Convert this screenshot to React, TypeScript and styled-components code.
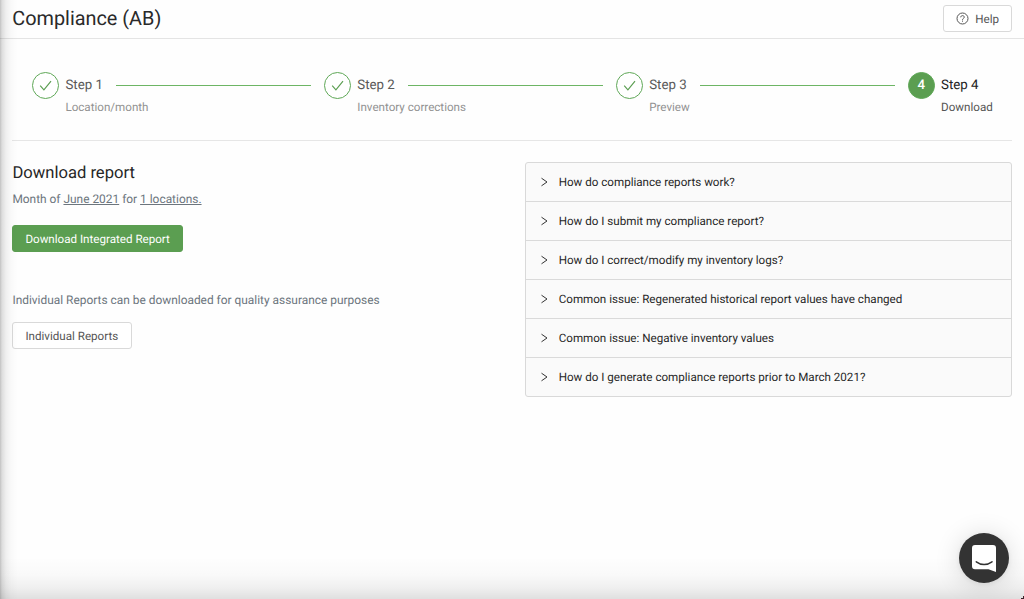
import React from "react";
import styled, { createGlobalStyle, css } from "styled-components";

const GlobalStyle = createGlobalStyle`
  *, *::before, *::after { box-sizing: border-box; }
  body {
    margin: 0;
    overflow: hidden;
    background: #fefefe;
    color: #2b2b2b;
    font-family: Roboto, "Liberation Sans", sans-serif;
    font-size: 11.62px;
    text-rendering: geometricPrecision;
  }
  h1, h2, p { margin: 0; font-weight: 400; }
  button { font-family: inherit; cursor: pointer; text-rendering: inherit; }
`;

const Page = styled.div`
  position: relative;
  display: flex;
  flex-direction: column;
  height: 599px;
`;

const EdgeShade = styled.div`
  position: absolute;
  inset: 0;
  pointer-events: none;
  background:
    linear-gradient(to right, rgba(0, 0, 0, 0.24) 0, rgba(0, 0, 0, 0.13) 2px, rgba(0, 0, 0, 0.06) 6px, rgba(0, 0, 0, 0.02) 11px, transparent 18px),
    linear-gradient(to top, rgba(0, 0, 0, 0.12) 0, rgba(0, 0, 0, 0.06) 11px, rgba(0, 0, 0, 0.02) 24px, transparent 42px);
  &::after {
    content: "";
    position: absolute;
    right: 0;
    bottom: 0;
    width: 3px;
    height: 3px;
    background: linear-gradient(135deg, transparent 50%, #3a2028 50%);
  }
`;

const Header = styled.header`
  display: flex;
  justify-content: space-between;
  align-items: flex-start;
  height: 39px;
  padding: 5px 11.6px 0 12.3px;
  border-bottom: 1px solid #e4e4e4;
`;

const Title = styled.h1`
  font-size: 19.85px;
  line-height: 28px;
  color: #2a2a2a;
`;

const Button = styled.button<{ $primary?: boolean }>`
  display: inline-flex;
  align-items: center;
  height: 27px;
  padding: 0 12.4px;
  border: 1px solid #d9d9d9;
  border-radius: 3px;
  background: #fff;
  color: #555;
  font-size: 11.62px;
  white-space: nowrap;
  ${(p) =>
    p.$primary &&
    css`
      border-color: #5b9e51;
      background: #5b9e51;
      color: #fff;
    `}
`;

const HelpIcon = styled.svg`
  width: 13px;
  height: 13px;
  margin: 0 6px 0 -0.4px;
`;

const Steps = styled.nav`
  display: flex;
  height: 102px;
  margin: 0 12px;
  padding: 33px 0 0 20px;
  border-bottom: 1px solid #e6e6e6;
`;

const Step = styled.div`
  display: flex;
  flex: 0 0 291.9px;
  &:last-child { flex-basis: auto; }
`;

const StepCircle = styled.span<{ $active?: boolean }>`
  display: flex;
  align-items: center;
  justify-content: center;
  flex: none;
  width: 27px;
  height: 27px;
  border: 1px solid #5fa857;
  border-radius: 50%;
  background: ${(p) => (p.$active ? "#5b9e51" : "#fff")};
  color: ${(p) => (p.$active ? "#fff" : "#5b9e51")};
  font-size: 13.3px;
  font-weight: 500;
`;

const StepText = styled.div`
  flex: 1;
  min-width: 0;
  margin-left: 6.4px;
`;

const StepTitle = styled.div<{ $active?: boolean }>`
  display: flex;
  align-items: center;
  height: 26px;
  font-size: 13.3px;
  color: ${(p) => (p.$active ? "#222" : "#595959")};
  white-space: nowrap;
  &::after {
    content: "";
    display: ${(p) => (p.$active ? "none" : "block")};
    flex: 1;
    height: 1px;
    margin: 1px 12.5px 0 13.5px;
    background: #6db564;
  }
`;

const StepDescription = styled.div<{ $active?: boolean }>`
  line-height: 18px;
  color: ${(p) => (p.$active ? "#555" : "#929292")};
`;

const Content = styled.main`
  display: grid;
  grid-template-columns: 1fr 487.5px;
  padding: 21px 11.6px 0 12px;
`;

const Report = styled.section`
  display: flex;
  flex-direction: column;
  align-items: flex-start;
`;

const ReportHeading = styled.h2`
  padding-left: 0.4px;
  font-size: 16.6px;
  line-height: 24px;
  color: #262626;
`;

const Copy = styled.p`
  padding-left: 0.4px;
  font-size: 11.92px;
  line-height: 18px;
  color: #6c757d;
`;

const Summary = styled(Copy)`
  margin: 4px 0 17px;
`;

const Note = styled(Copy)`
  margin: 39px 0 13px;
`;

const Questions = styled.section`
  height: 235px;
  border: 1px solid #d9d9d9;
  border-radius: 3px;
  background: #fafafa;
  overflow: hidden;
`;

const Question = styled.div`
  display: flex;
  align-items: center;
  height: 39px;
  padding: 0 0 1px 14px;
  border-bottom: 1px solid #dadada;
  color: #262626;
  &:last-child { border-bottom: 0; height: 38px; }
`;

const Chevron = styled.svg`
  width: 9px;
  height: 10px;
  margin-right: 9.8px;
`;

const ChatLauncher = styled.button`
  position: absolute;
  right: 15px;
  bottom: 16px;
  display: flex;
  align-items: center;
  justify-content: center;
  width: 50px;
  height: 50px;
  padding: 0;
  border: 0;
  border-radius: 50%;
  background: #333;
  box-shadow: 0 1px 5px rgba(0, 0, 0, 0.07), 0 2px 27px rgba(0, 0, 0, 0.14);
`;

const steps = [
  { title: "Step 1", description: "Location/month" },
  { title: "Step 2", description: "Inventory corrections" },
  { title: "Step 3", description: "Preview" },
  { title: "Step 4", description: "Download", active: true },
];

const questions = [
  "How do compliance reports work?",
  "How do I submit my compliance report?",
  "How do I correct/modify my inventory logs?",
  "Common issue: Regenerated historical report values have changed",
  "Common issue: Negative inventory values",
  "How do I generate compliance reports prior to March 2021?",
];

export default function App() {
  return (
    <Page>
      <GlobalStyle />
      <Header>
        <Title>Compliance (AB)</Title>
        <Button>
          <HelpIcon viewBox="0 0 13 13" fill="none" stroke="#555" strokeWidth="1">
            <circle cx="6.5" cy="6.5" r="5.5" />
            <path d="M4.7 5.3C4.7 3.1 8.3 3.1 8.3 5.2C8.3 6.4 6.5 6.3 6.5 7.8" />
            <path d="M6.5 8.6v1.1" />
          </HelpIcon>
          Help
        </Button>
      </Header>
      <Steps>
        {steps.map((step, i) => (
          <Step key={step.title}>
            <StepCircle $active={step.active}>
              {step.active ? (
                i + 1
              ) : (
                <svg width="13" height="13" viewBox="0 0 13 13" fill="none" stroke="#5b9e51" strokeWidth="1.15">
                  <path d="M1.2 6.7L4.9 10.9L12 2.1" />
                </svg>
              )}
            </StepCircle>
            <StepText>
              <StepTitle $active={step.active}>{step.title}</StepTitle>
              <StepDescription $active={step.active}>{step.description}</StepDescription>
            </StepText>
          </Step>
        ))}
      </Steps>
      <Content>
        <Report>
          <ReportHeading>Download report</ReportHeading>
          <Summary>
            Month of <u>June 2021</u> for <u>1 locations.</u>
          </Summary>
          <Button $primary>Download Integrated Report</Button>
          <Note>Individual Reports can be downloaded for quality assurance purposes</Note>
          <Button>Individual Reports</Button>
        </Report>
        <Questions>
          {questions.map((question) => (
            <Question key={question}>
              <Chevron viewBox="0 0 9 10" fill="none" stroke="#333" strokeWidth="1">
                <path d="M1.5 1.2L7 5L1.5 8.8" />
              </Chevron>
              {question}
            </Question>
          ))}
        </Questions>
      </Content>
      <EdgeShade />
      <ChatLauncher aria-label="Open chat">
        <svg width="24" height="27" viewBox="0 0 24 27">
          <path d="M3 0H21Q24 0 24 3V27L16.5 24.3H3Q0 24.3 0 21.3V3Q0 0 3 0Z" fill="#fff" />
          <path d="M4.3 16.8Q12 22.4 20 16.8" fill="none" stroke="#333" strokeWidth="1.5" strokeLinecap="round" />
        </svg>
      </ChatLauncher>
    </Page>
  );
}
